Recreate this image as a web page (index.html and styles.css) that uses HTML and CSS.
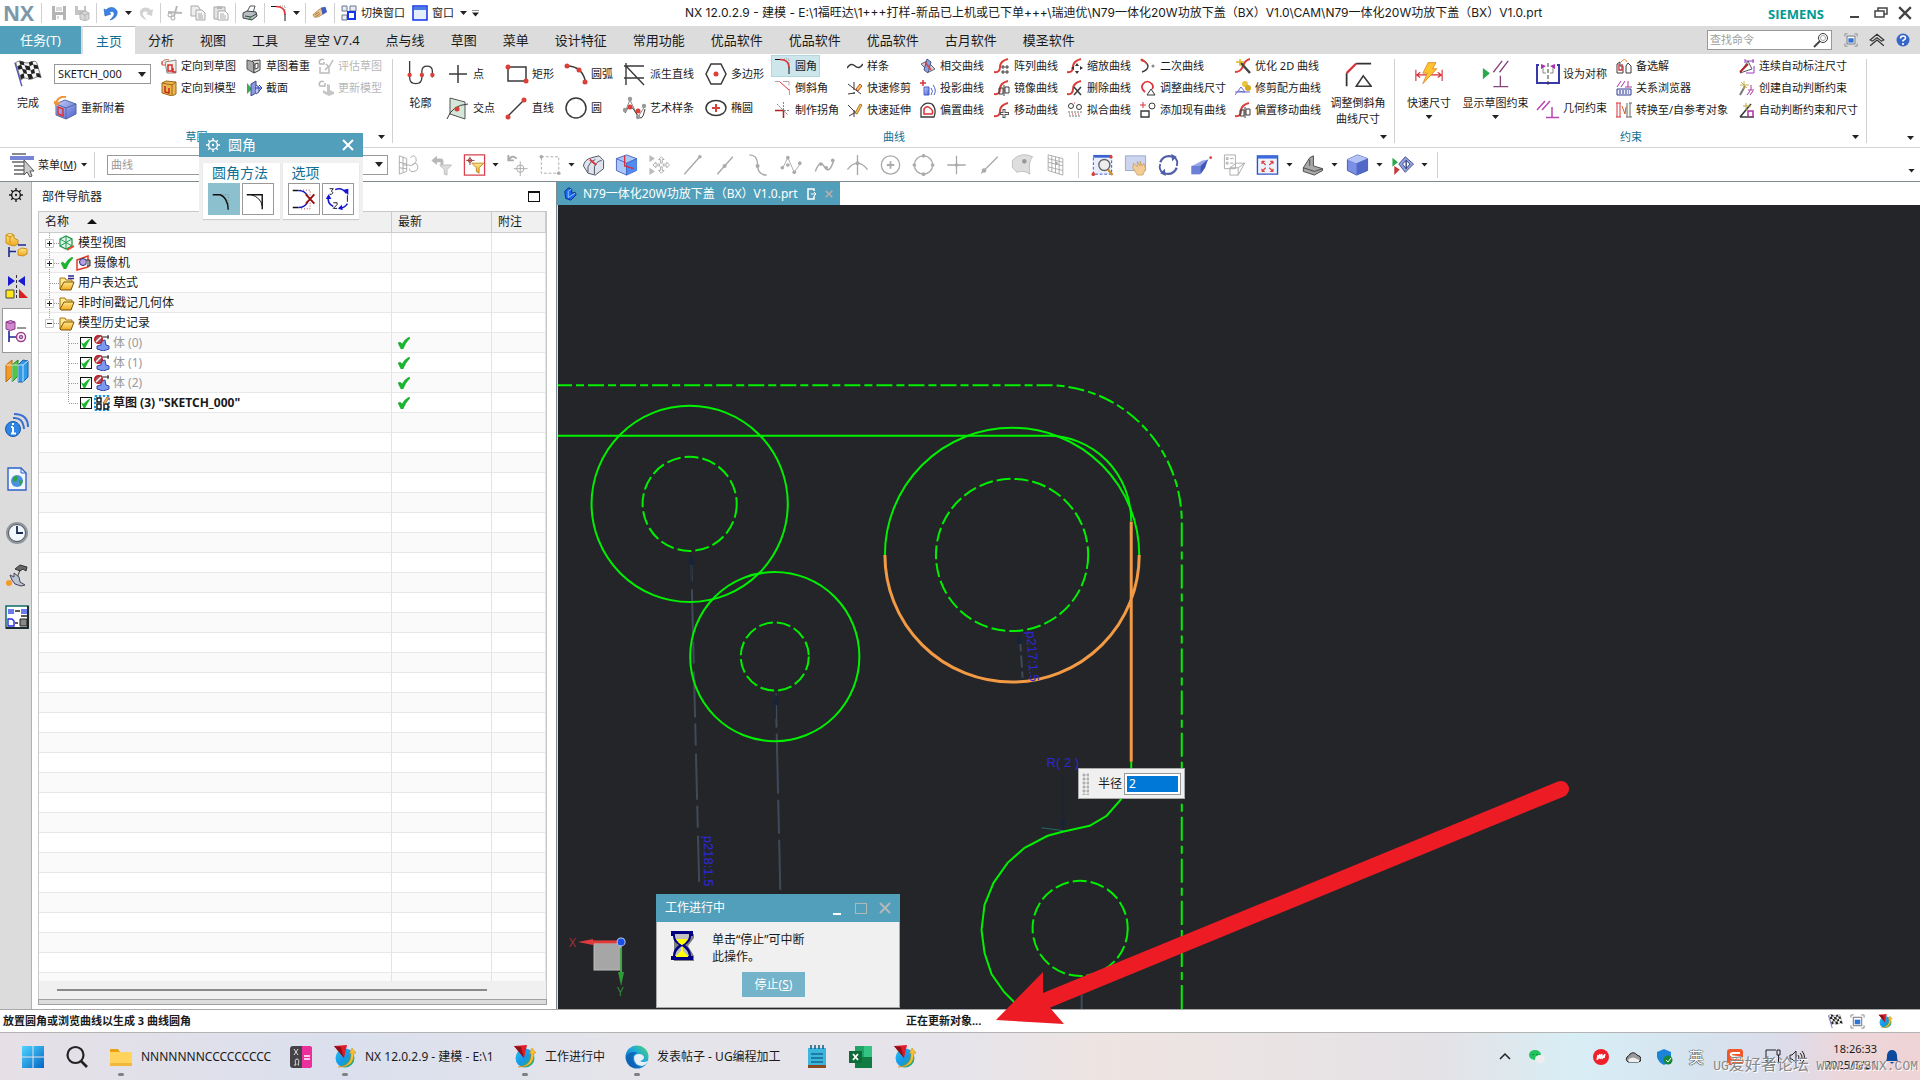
FILE: index.html
```
<!DOCTYPE html>
<html lang="zh-CN">
<head>
<meta charset="utf-8">
<meta name="viewport" content="width=device-width, initial-scale=1">
<title>NX 12.0.2.9 - 建模</title>
<link rel="stylesheet" href="styles.css">
</head>
<body>
<svg class="sprite" aria-hidden="true">
<defs>
<linearGradient id="gBlue" x1="0" y1="0" x2="1" y2="1"><stop offset="0" stop-color="#c9d2fb"/><stop offset="1" stop-color="#4a5fcb"/></linearGradient>
<linearGradient id="gGold" x1="0" y1="0" x2="0" y2="1"><stop offset="0" stop-color="#ffe98c"/><stop offset="1" stop-color="#f0a81c"/></linearGradient>
<linearGradient id="gWin" x1="0" y1="0" x2="1" y2="1"><stop offset="0" stop-color="#4fd4ff"/><stop offset="1" stop-color="#0467c4"/></linearGradient>
<linearGradient id="gNx" x1="0" y1="0" x2="1" y2="1"><stop offset="0" stop-color="#27c5f3"/><stop offset=".5" stop-color="#1796e8"/><stop offset="1" stop-color="#1fb65a"/></linearGradient>
<linearGradient id="gEdge" x1="1" y1="0" x2="0" y2="1"><stop offset="0" stop-color="#52d869"/><stop offset=".45" stop-color="#1aa6e0"/><stop offset="1" stop-color="#0a4fa8"/></linearGradient>
</defs>
<!-- title bar -->
<symbol id="save" viewBox="0 0 16 16"><path d="M1 1h14v14H1z" fill="#b4b4b4"/><path d="M4 1h8v6H4zM5 10h7v5H5z" fill="#fff"/><path d="M5 3h6M5 5h6M7 11v3" stroke="#b4b4b4"/></symbol>
<symbol id="save2" viewBox="0 0 16 16"><path d="M1 1h11v9H1z" fill="#c4c4c4"/><path d="M4 1h6v4H4z" fill="#fff"/><path d="M6 8l5-2 4 2v6l-4 2-5-2z" fill="#d8d8d8" stroke="#b4b4b4"/><path d="M6 8l5 2 4-2M11 10v6" stroke="#b4b4b4" fill="none"/></symbol>
<symbol id="undo" viewBox="0 0 16 16"><path d="M1 4l1 7 6-2-2-1c3-3 6-1 5 2-1 2-2 3-4 5 5-1 8-5 7-9-2-4-7-5-11-1z" fill="#3b82e6" stroke="#2463b8" stroke-width=".6"/></symbol>
<symbol id="redo" viewBox="0 0 16 16"><path d="M15 4l-1 7-6-2 2-1c-3-3-6-1-5 2 1 2 2 3 4 5-5-1-8-5-7-9 2-4 7-5 11-1z" fill="#d2d2d2"/></symbol>
<symbol id="cut" viewBox="0 0 16 16"><path d="M10 1L7 11M1 7l14 1" stroke="#b8b8b8" stroke-width="2"/><circle cx="6" cy="13" r="2" class="s-g"/><circle cx="3" cy="10" r="2" class="s-g"/></symbol>
<symbol id="copy" viewBox="0 0 16 16"><path d="M1 1h7l2 3v7H1z" fill="#eee" class="b-g"/><path d="M6 5h6l3 3v7H6z" fill="#f4f4f4" class="b-g"/><path d="M8 9h4M8 11h5M8 13h5" class="s-g"/></symbol>
<symbol id="paste" viewBox="0 0 16 16"><path d="M1 2h11v12H1z" fill="#e4e4e4" class="b-g"/><path d="M4 1h5v3H4z" fill="#b8b8b8"/><path d="M5 6h7l3 3v6H5z" fill="#fff" class="b-g"/><path d="M7 9h4M7 11h6M7 13h6" class="s-g"/></symbol>
<symbol id="print" viewBox="0 0 16 16"><path d="M5 7l3-6h5l-2 7z" fill="#fff" stroke="#555"/><path d="M1 8l4-2 9 1 1 4-5 4-9-2z" fill="#b9bec4" stroke="#3c4248"/><path d="M3 11l6 1 5-3" stroke="#3c4248" fill="none"/><circle cx="8" cy="13" r="1" fill="#2aa83a"/></symbol>
<symbol id="fillet" viewBox="0 0 16 16"><path d="M9 1h5v5" stroke="#999" stroke-dasharray="1 1" fill="none"/><path d="M0 1.500h5" class="s-b"/><path d="M5 1.500q9 0 9 8" stroke="#e0303a" stroke-width="1.600" fill="none"/><path d="M14 9v7" class="s-b"/></symbol>
<symbol id="chamfer" viewBox="0 0 16 16"><path d="M0 1.500h5M14.500 9v6M8 1.500h6v4" stroke="#b9a0a0" fill="none"/><path d="M5 2l9 8" stroke="#e0303a" fill="none"/></symbol>
<symbol id="corner" viewBox="0 0 16 16"><path d="M0 8.500h8M8.500 8v8" stroke="#b02020" stroke-width="1.500"/><path d="M8.500 0v8M9 8.500h6M2 2l11 11" stroke="#888" stroke-dasharray="2 1"/></symbol>
<symbol id="hand" viewBox="0 0 18 16"><path d="M1 10l7-6 4-2 2 6-6 4-5 1z" fill="#eec58e" stroke="#9a6a35" stroke-width=".7"/><path d="M10 2l5-1 2 6-5 3z" fill="#3d5fc4"/><path d="M3 10l5-3M4 12l5-3" stroke="#9a6a35"/></symbol>
<symbol id="switch" viewBox="0 0 16 16"><path d="M1 1h5v5H1zM9 1h6v5H9zM1 10h5v5H1z" fill="#e8ecf6" stroke="#6b7688"/><path d="M7 7h7v7H7z" fill="#fff" stroke="#1036f0" stroke-width="2"/></symbol>
<symbol id="win" viewBox="0 0 16 16"><path d="M1 1h14v14H1z" fill="#e4eefc" stroke="#1030e8" stroke-width="1.500"/><path d="M2 2h12v3H2z" fill="#4a7de0"/></symbol>
<symbol id="restore" viewBox="0 0 14 14"><path d="M4 5V2h9v6h-3M1 5h9v6H1z" stroke="#444" stroke-width="1.500" fill="none"/></symbol>
<symbol id="x" viewBox="0 0 12 12"><path d="M1 1l10 10M11 1L1 11" stroke="currentColor" stroke-width="2"/></symbol>
<symbol id="lens" viewBox="0 0 16 16"><circle cx="10" cy="6" r="4.500" class="s-k"/><circle cx="10" cy="6" r="2.500" stroke="#aaa" fill="none"/><path d="M7 9l-6 6" stroke="#444" stroke-width="2"/></symbol>
<symbol id="full" viewBox="0 0 16 16"><path d="M1 4V1h3M12 1h3v3M15 12v3h-3M4 15H1v-3" stroke="#888" fill="none"/><path d="M3.500 3.500h9v9h-9z" fill="#fff" stroke="#667"/><path d="M5 6h6v5H5z" fill="#2f74d0"/></symbol>
<symbol id="up2" viewBox="0 0 14 12"><path d="M1 6l6-5 6 5-2 1-4-3-4 3zM1 11l6-5 6 5" stroke="#333" fill="none"/></symbol>
<symbol id="help" viewBox="0 0 14 14"><circle cx="7" cy="7" r="6.500" fill="#3766c8"/><path d="M4.500 5.500q0-2.500 2.500-2.500t2.500 2q0 1.500-2.500 2.500v1M7 10v2" stroke="#fff" stroke-width="1.600" fill="none"/></symbol>
<!-- sketch group -->
<symbol id="flag" viewBox="0 0 32 32"><path d="M1 3l8 27" stroke="#5656c0" stroke-width="1.600"/><path d="M2 3c6-5 9 2 15 0 5-2 8-2 9 0l5 17c-6-3-9 3-14 2-4-2-6-2-9 1z" fill="#f6f6f6" stroke="#333" stroke-width=".7"/><path d="M6 1l5 1 1 4-5-1zM17 3l4-2 1 4-4 2zM4 7l4-2 2 5-5 1zM12 6l6 1 1 5-5-1zM22 5l5 1 1 4-5 0zM9 10l5 1 1 5-4-1zM19 12l4-2 1 5-4 1zM7 17l4-2 1 5-4 2zM15 16l5 0 2 5-5 1zM25 15l4 0 2 5-5-1z" fill="#222"/></symbol>
<symbol id="reattach" viewBox="0 0 24 24"><path d="M2 8l9-4 11 4v10l-10 5-10-4z" fill="url(#gBlue)" stroke="#5566a8"/><path d="M2 8l10 4 10-4M12 12v11" stroke="#5566a8" fill="none"/><path d="M4 11l5 2v7l-5-2z" stroke="#e03030" stroke-width="1.500" fill="none"/><path d="M12 1C6 0 3 3 2 8M0 5l2 4 4-3" stroke="#f0923a" stroke-width="2" fill="none"/></symbol>
<symbol id="orient" viewBox="0 0 16 16"><path d="M4 4l11-2v13l-9 0z" fill="#f1efe8" stroke="#888"/><path d="M7 7h4v6H7zM12 10v4h3" stroke="#d62c2c" stroke-width="1.500" fill="none"/><path d="M1 6c0-4 4-5 7-4M1 3v4h3" stroke="#c84a3a" fill="none"/></symbol>
<symbol id="orientm" viewBox="0 0 16 16"><path d="M1 3l4-2 10 1v12l-4 2-10-3z" fill="#efb64e" stroke="#98691c"/><path d="M1 3l10 2v10M11 5l4-3" stroke="#98691c" fill="none"/><path d="M4 6v6l4 1V8" stroke="#c22a20" stroke-width="1.500" fill="none"/></symbol>
<symbol id="accent" viewBox="0 0 16 16"><path d="M1 2l7 2v11l-7-4z" fill="#aaa" stroke="#555"/><path d="M6 3l8-1v10l-6 3V5z" fill="#dcdcdc" stroke="#444"/><path d="M9 6l3-1v5l-3 1z" fill="#fff" stroke="#444"/></symbol>
<symbol id="section" viewBox="0 0 16 16"><path d="M1 3v11l5-5z" fill="#37ad4c"/><path d="M5 4l5-3v12l-5 3z" fill="#8a9adf" stroke="#444c88"/><path d="M10 5l3 2v5l-3 2" fill="#bfc8f4" stroke="#444c88"/><path d="M9 8h6M13 5l3 3-3 3" stroke="#1b38c8" fill="none"/></symbol>
<symbol id="eval" viewBox="0 0 16 16"><path d="M6 2C3 0 0 3 2 6h4V4M2 9v6h9V8M8 6l3 3 4-7M7 12l4-4" stroke="#bbb" stroke-width="1.500" fill="none"/></symbol>
<symbol id="update" viewBox="0 0 16 16"><path d="M6 2C3 0 0 3 2 6h5V3" stroke="#bbb" stroke-width="1.500" fill="none"/><path d="M5 10l4 2V4l3 1v5l4 2v2l-5 2-6-3z" fill="#c6c6c6"/></symbol>
<!-- curve group -->
<symbol id="profile" viewBox="0 0 32 32"><path d="M3 1v19q0 7 7 7t7-7V13q0-6 6-6t6 6v7" class="s-k" stroke-width="1.500"/><circle cx="3" cy="17" r="2.500" class="dot"/><circle cx="17" cy="17" r="2.500" class="dot"/><circle cx="29" cy="17" r="2.500" class="dot"/></symbol>
<symbol id="point" viewBox="0 0 24 24"><path d="M12 3v18M3 12h18" class="s-k" stroke-width="1.500"/></symbol>
<symbol id="ipoint" viewBox="0 0 24 24"><path d="M4 2l15 4v17L4 18z" fill="#d3e6d8" stroke="#555"/><path d="M1 23Q6 9 22 8" class="s-k"/><circle cx="11" cy="13" r="2.500" class="dot"/></symbol>
<symbol id="rect" viewBox="0 0 24 24"><path d="M3 5h18v14H3z" class="s-k" stroke-width="1.500"/><circle cx="3" cy="5" r="2.500" class="dot"/><circle cx="21" cy="19" r="2.500" class="dot"/></symbol>
<symbol id="line" viewBox="0 0 24 24"><path d="M3 20L19 4" class="s-k" stroke-width="1.500"/><circle cx="3" cy="21" r="2.500" class="dot"/><circle cx="19" cy="4" r="2.500" class="dot"/></symbol>
<symbol id="arc" viewBox="0 0 24 24"><path d="M3 4q16 0 19 18" class="s-k" stroke-width="1.500"/><circle cx="3" cy="4" r="2.500" class="dot"/><circle cx="15" cy="8" r="2.500" class="dot"/><circle cx="21" cy="20" r="2.500" class="dot"/></symbol>
<symbol id="circle" viewBox="0 0 24 24"><circle cx="12" cy="12" r="10" class="s-k" stroke-width="1.500"/></symbol>
<symbol id="derive" viewBox="0 0 24 24"><path d="M1 4h20M1 16h20M3 1v22M3 4l18 19" class="s-k" stroke-width="1.400"/></symbol>
<symbol id="studio" viewBox="0 0 24 24"><path d="M2 16L7 4l8 17 7-11" stroke="#888" fill="none"/><path d="M2 17q5-12 11 0t9-4" class="s-k"/><circle cx="2" cy="14" r="2.200" fill="#999"/><circle cx="7" cy="3" r="2.200" fill="#999"/><circle cx="15" cy="21" r="2.200" fill="#999"/><circle cx="21" cy="10" r="2.200" fill="#999"/><circle cx="7" cy="11" r="2.500" class="dot"/><circle cx="15" cy="15" r="2.500" class="dot"/></symbol>
<symbol id="polygon" viewBox="0 0 24 24"><path d="M7 2h10l5 10-5 10H7L2 12z" class="s-k" stroke-width="1.500"/><circle cx="12" cy="12" r="2.500" class="dot"/></symbol>
<symbol id="ellipse" viewBox="0 0 24 24"><ellipse cx="12" cy="12" rx="10" ry="7.500" class="s-k" stroke-width="1.500"/><path d="M12 8v8M8 12h8" stroke="#d9403a" stroke-width="2"/></symbol>
<symbol id="spline" viewBox="0 0 16 16"><path d="M0 10q4-6 8-2t8-2" class="s-k" stroke-width="1.500"/></symbol>
<symbol id="qtrim" viewBox="0 0 16 16"><path d="M1 4l13 10M1 14l7-1" class="s-k"/><path d="M7 2v12" class="s-k" stroke-dasharray="8 2"/><path d="M9 9l4-5 2 2-4 5z" fill="#f0c84e" stroke="#b02a20" stroke-width=".8"/></symbol>
<symbol id="qext" viewBox="0 0 16 16"><path d="M1 3l9 9M2 14l7-4M7 8v7" class="s-k"/><path d="M8 11l5-9 2 1-5 9z" fill="#f0c84e" stroke="#9a5a20" stroke-width=".8"/></symbol>
<symbol id="intersect" viewBox="0 0 16 16"><path d="M1 6l6-3 8 8-6 3z" fill="#c9d0e4" stroke="#667"/><path d="M7 1l4 3-3 11-4-3z" fill="#8ea2dc" stroke="#44548c"/><path d="M5 4l6 8" stroke="#d9403a" stroke-width="1.500"/></symbol>
<symbol id="project" viewBox="0 0 16 16"><path d="M3 0v6M0 3h6" stroke="#d9303a" stroke-width="1.500"/><path d="M4 7h5v8H4z" fill="url(#gBlue)" stroke="#4a5fcb"/><path d="M11 8q3 3 0 7M13 5q4 5 1 10" stroke="#4a5fcb" fill="none"/></symbol>
<symbol id="offset" viewBox="0 0 16 16"><path d="M1 15V6q4-7 11-4 5 5 2 13z" class="s-k" stroke-width="1.300"/><path d="M4 12V7q3-4 6-1 4 3 2 6z" stroke="#d9303a" fill="none" stroke-width="1.500"/></symbol>
<symbol id="scurve" viewBox="0 0 16 16"><path d="M0 14q6 1 6-5t8-8" stroke="#d9403a" stroke-width="2" fill="none"/></symbol>
<symbol id="pattern" viewBox="0 0 16 16"><use href="#scurve"/><path d="M8 8h2v2H8zM12 8h2v2h-2zM8 13h2v2H8zM12 13h2v2h-2z" class="s-k"/></symbol>
<symbol id="mirror" viewBox="0 0 16 16"><use href="#scurve"/><path d="M5 8h4v6H5zM11 7h4v6h-4zM10 5v11" class="s-k"/></symbol>
<symbol id="move" viewBox="0 0 16 16"><use href="#scurve"/><path d="M10 7v9M6 11.500h9" stroke="#555" stroke-width="3"/><path d="M10 8v7M7 11.500h7" stroke="#fff"/></symbol>
<symbol id="scale" viewBox="0 0 16 16"><use href="#scurve"/><path d="M10 5l2 3h-4zM10 16l-2-3h4zM4 10l3-2v4zM16 10l-3-2v4z" fill="#333"/></symbol>
<symbol id="delete" viewBox="0 0 16 16"><use href="#scurve"/><path d="M7 7l7 8M14 7l-7 8" class="s-k" stroke-width="1.500"/></symbol>
<symbol id="fit" viewBox="0 0 16 16"><circle cx="4" cy="4" r="2.500" class="s-k"/><circle cx="12" cy="5" r="2.500" class="s-k"/><path d="M1 10h14M2 14h12" stroke="#777" stroke-dasharray="2 1"/><path d="M2 12h10M7 1h2" stroke="#d9303a" stroke-dasharray="1 2"/></symbol>
<symbol id="conic" viewBox="0 0 16 16"><path d="M2 2q5 2 6 6 0 4-6 6" class="s-k" stroke-width="1.400"/><path d="M2 2q4 2 5 4" stroke="#d9403a" stroke-width="1.500" fill="none"/><circle cx="2" cy="2" r="1.500" class="dot"/><circle cx="13" cy="8" r="1.500" fill="#888"/></symbol>
<symbol id="resize" viewBox="0 0 16 16"><path d="M5 12Q0 8 3 4q4-5 9 0 2 3 0 5" stroke="#d9303a" fill="none" stroke-width="1.700"/><path d="M7 15l4-6 4 6z" fill="#fff" class="b-k"/></symbol>
<symbol id="addcurve" viewBox="0 0 16 16"><path d="M3 0v6M0 3h6" stroke="#d9303a"/><circle cx="12" cy="4" r="3" class="s-k"/><path d="M1 9h8v6H1z" class="s-k" stroke-width="1.400"/></symbol>
<symbol id="optimize" viewBox="0 0 16 16"><path d="M0 14q6 0 8-6t7-7" stroke="#d9403a" stroke-width="2" fill="none"/><path d="M5 4l10 11" stroke="#444" stroke-width="2.500"/><path d="M5 1v7M1 4h8" stroke="#e0b82a" stroke-width="1.500"/></symbol>
<symbol id="recipe" viewBox="0 0 16 16"><path d="M0 15l6-8 4 5-7-1M0 12h15" stroke="#6b6bc8" fill="none"/><circle cx="10" cy="4" r="3" fill="#e8c442"/><circle cx="13" cy="8" r="3" fill="#d4a820"/></symbol>
<symbol id="bigchamfer" viewBox="0 0 32 32"><path d="M3 30V15M14 4h17" stroke="#333" stroke-width="2"/><path d="M3 15L14 4" stroke="#d9303a" stroke-width="2.500"/><path d="M14 30l8-12 9 12z" class="s-k" stroke-width="1.800"/></symbol>
<!-- constraint group -->
<symbol id="rapid" viewBox="0 0 32 32"><path d="M1 11v13M31 11v13M2 17h28M6 14l-4 3 4 3M26 14l4 3-4 3" stroke="#d9303a" stroke-width="1.300" fill="none"/><path d="M15 3h9l-4 7h5L9 27l5-12H9z" fill="#ffc52e" stroke="#e0862a"/></symbol>
<symbol id="showcon" viewBox="0 0 32 32"><path d="M1 9l8 6-8 7z" fill="#2ba84a"/><path d="M13 14L23 1M20 14L30 1M21 18v13M13 30.500h17" stroke="#86447c" stroke-width="1.500"/></symbol>
<symbol id="symm" viewBox="0 0 24 24"><path d="M3 3H1v18h22V3h-2" stroke="#3838a8" stroke-width="2" fill="none"/><path d="M7 3v8h3M17 3v8h-3" stroke="#888" fill="none"/><path d="M12 1v22" class="s-k" stroke-dasharray="4 2"/><path d="M5 2l5 2-5 3zM19 2l-5 2 5 3z" fill="#b030b0"/></symbol>
<symbol id="geocon" viewBox="0 0 24 24"><path d="M1 14l8-9M6 14l8-9M16 11v11M10 21.500h13" stroke="#b848b0" stroke-width="1.500"/></symbol>
<symbol id="alt" viewBox="0 0 16 16"><path d="M1 15V6l3-2v4h3v7zM10 15V8l2-3 3 3v7z" class="s-k"/><path d="M3 6v6h3V6" stroke="#d9303a" stroke-width="1.300" fill="none"/><path d="M5 4q4-5 6 0" stroke="#e08a30" fill="none"/></symbol>
<symbol id="browser" viewBox="0 0 16 16"><path d="M1 7l4-6M5 7l4-6M12 1v6M9 7h7" stroke="#b030a0" fill="none"/><path d="M1 9h14v6H1z" fill="#eef" stroke="#333c90"/><path d="M3 11h10M3 13h10" stroke="#333c90" stroke-dasharray="2 1"/></symbol>
<symbol id="convert" viewBox="0 0 16 16"><path d="M1 1v14M4 1v14M0 15h5M0 1h5" stroke="#d9303a"/><path d="M6 4l3 8 1-7" stroke="#d06020" fill="none"/><path d="M11 1v14M14 1v14M10 15h6M13 1h3" stroke="#666"/></symbol>
<symbol id="autodim" viewBox="0 0 16 16"><path d="M6 3h9M6 1v4M14 1v4M7 15h8V8" stroke="#9a3ac0" fill="none"/><path d="M1 15L9 3l4 8z" fill="none" stroke="#556"/><path d="M1 14l8-8" stroke="#b02828" stroke-width="2"/></symbol>
<symbol id="autocon" viewBox="0 0 16 16"><path d="M6 6l-5 9" stroke="#777" stroke-width="2"/><path d="M5 1v8M1 5h9M2 2l6 6" stroke="#c8b050"/><path d="M12 5v5M9 10h6M8 15l3-4M11 15l3-4" stroke="#b030a0"/></symbol>
<symbol id="infer" viewBox="0 0 16 16"><path d="M1 15L12 2M1 15h14" class="s-k" stroke-width="1.600"/><path d="M9 15V9h5v6" stroke="#b030a0" stroke-width="1.500" fill="none"/><path d="M7 1v7M4 4h8" stroke="#b8a840"/></symbol>
<!-- selection bar -->
<symbol id="menu" viewBox="0 0 24 24"><path d="M2 1h14M2 9h14M4 13h11M4 17h11M4 21h11" stroke="#666" stroke-width="1.500"/><path d="M0 3h24v4H0z" fill="#7684d6"/><path d="M14 7v15l3-3 3 5 2-1-2-5h4z" fill="#ccc" stroke="#555"/></symbol>
<symbol id="t1" viewBox="0 0 24 24"><path d="M2 2v20l8-3V5zM2 9l8 2M2 15l8 1M6 3v17M6 12h6" class="s-g"/><path d="M14 4q4-4 6 0t-2 7-6 1M16 12q5-4 6 1t-4 6-5-3" class="s-g"/></symbol>
<symbol id="t2" viewBox="0 0 24 24"><path d="M1 7l6-5v3h4q4 0 3 6l-3 3V9H7v3z" fill="#b8b8b8"/><path d="M10 12h13l-5 5v6l-3-1v-5z" fill="#ddd" stroke="#bbb"/></symbol>
<symbol id="t3" viewBox="0 0 24 24"><path d="M1 1h22v22H1z" fill="#fff" stroke="#d84050" stroke-width="1.400"/><path d="M7 3v9M3 7h9M5 7a2 2 0 104 0 2 2 0 10-4 0" stroke="#9a3030" fill="none"/><path d="M9 10h13l-5 5v6l-3-2v-4z" fill="url(#gGold)" stroke="#c08420"/></symbol>
<symbol id="t4" viewBox="0 0 24 24"><path d="M2 1v6h6M2 7q4-7 9-2" stroke="#aaa" stroke-width="2" fill="none"/><circle cx="15" cy="16" r="4" class="s-g"/><path d="M15 8v16M8 16h15" class="s-g"/></symbol>
<symbol id="t5" viewBox="0 0 24 24"><path d="M2 3h19v18H2z" class="s-g" stroke-dasharray="3 2"/><circle cx="2" cy="3" r="2" fill="#aaa"/><circle cx="21" cy="21" r="2" fill="#aaa"/></symbol>
<symbol id="t6" viewBox="0 0 24 24"><path d="M1 13q1-7 9-9l8-2 5 5v9l-9 7-8-2z" fill="#dfe3ec" stroke="#454c58"/><path d="M13 22v-8q2-6 8-7M6 20v-6q2-6 8-8" stroke="#454c58" fill="none"/><path d="M8 6l7 6" stroke="#d9303a" stroke-width="2"/></symbol>
<symbol id="t7" viewBox="0 0 24 24"><path d="M1 5l11-4 11 4v13l-11 5-11-5z" fill="#a8c8f8" stroke="#4460c0"/><path d="M12 10v13l11-5V5z" fill="#4f8af0"/><path d="M1 5l11 5 11-5M12 10v13" stroke="#4460c0" fill="none"/><path d="M10 2v11l10 3" stroke="#d9303a" stroke-width="1.500" fill="none"/></symbol>
<symbol id="t8" viewBox="0 0 24 24"><path d="M1 1l6 4-6 4zM1 15l6 4-6 4z" fill="#bbb"/><path d="M14 3l3 3h-2v4h-2V6h-2zM14 21l3-3h-2v-4h-2v4h-2zM5 12l3-3v2h4v2H8v2zM23 12l-3-3v2h-4v2h4v2z" class="s-g"/></symbol>
<symbol id="t9" viewBox="0 0 24 24"><path d="M3 22L20 3" class="s-g" stroke-width="1.500"/><circle cx="20" cy="3" r="2" fill="#aaa"/></symbol>
<symbol id="t10" viewBox="0 0 24 24"><path d="M3 22L20 3" class="s-g" stroke-width="1.500"/><circle cx="11" cy="13" r="2.200" fill="#aaa"/></symbol>
<symbol id="t11" viewBox="0 0 24 24"><path d="M2 1q9 0 9 11t10 11" class="s-g" stroke-width="1.500"/><circle cx="11" cy="13" r="2.200" fill="#aaa"/></symbol>
<symbol id="t12" viewBox="0 0 24 24"><path d="M2 16L8 4l7 16 7-10" class="s-g"/><circle cx="2" cy="15" r="2" fill="#aaa"/><circle cx="8" cy="4" r="2" fill="#aaa"/><circle cx="8" cy="12" r="2" fill="#aaa"/><circle cx="15" cy="20" r="2" fill="#aaa"/><circle cx="21" cy="10" r="2" fill="#aaa"/></symbol>
<symbol id="t13" viewBox="0 0 24 24"><path d="M2 19q5-14 10-5t10-7" class="s-g" stroke-width="1.600"/><circle cx="8" cy="11" r="2" fill="#aaa"/><circle cx="14" cy="15" r="2" fill="#aaa"/><circle cx="21" cy="7" r="2" fill="#aaa"/></symbol>
<symbol id="t14" viewBox="0 0 24 24"><path d="M1 17q11-14 22 0M12 1v22" class="s-g" stroke-width="1.500"/><circle cx="12" cy="10" r="2.200" fill="#aaa"/></symbol>
<symbol id="t15" viewBox="0 0 24 24"><circle cx="12" cy="12" r="10" class="s-g" stroke-width="1.400"/><path d="M12 8v8M8 12h8" stroke="#aaa" stroke-width="2"/></symbol>
<symbol id="t16" viewBox="0 0 24 24"><circle cx="12" cy="12" r="10" class="s-g" stroke-width="1.400"/><circle cx="12" cy="2" r="2" fill="#aaa"/><circle cx="12" cy="22" r="2" fill="#aaa"/><circle cx="2" cy="12" r="2" fill="#aaa"/><circle cx="22" cy="12" r="2" fill="#aaa"/></symbol>
<symbol id="t17" viewBox="0 0 24 24"><path d="M12 2v20M2 12h20" class="s-g" stroke-width="1.400"/><circle cx="12" cy="12" r="2" fill="#aaa"/></symbol>
<symbol id="t18" viewBox="0 0 24 24"><path d="M3 21L21 3" class="s-g" stroke-width="1.400"/><circle cx="6" cy="18" r="2.500" fill="#aaa"/></symbol>
<symbol id="t19" viewBox="0 0 24 24"><path d="M1 7Q10-3 23 3q-5 5-3 19-6-5-14-2L1 15z" fill="#dedede" stroke="#bbb"/><circle cx="14" cy="8" r="2.500" fill="#999"/></symbol>
<symbol id="t20" viewBox="0 0 24 24"><path d="M4 1l16 4v18L4 18zM8 2v17M12 3v18M16 4v18M4 5l16 4M4 9l16 4M4 14l16 4" class="s-g"/><circle cx="13" cy="10" r="1.500" fill="#aaa"/></symbol>
<symbol id="v1" viewBox="0 0 24 24"><path d="M2 2h20v20H2z" fill="#e9eefc" stroke="#2848d0" stroke-dasharray="3 2"/><path d="M2 1h20v3H2z" fill="#3b62d0"/><circle cx="14" cy="12" r="6" fill="#eee" stroke="#666" stroke-width="1.500"/><path d="M18 17l5 6" stroke="#c89030" stroke-width="2.500"/><circle cx="21" cy="3" r="2" class="dot"/><circle cx="2" cy="22" r="2" class="dot"/></symbol>
<symbol id="v2" viewBox="0 0 24 24"><path d="M1 2h22v16H1z" fill="#ccd4ee" stroke="#98a4cc"/><path d="M10 10l4 4V8l3 5V8l2 5 2-3 2 6-3 7h-6l-5-8z" fill="#f1cc94" stroke="#c89a5c" stroke-width=".8"/></symbol>
<symbol id="v3" viewBox="0 0 24 24"><path d="M3 9q4-9 14-6M21 15q-4 9-14 6" stroke="#5060a8" stroke-width="2.500" fill="none"/><path d="M21 13q2-6-3-10M3 11q-2 6 3 10" stroke="#5060a8" stroke-width="2" fill="none"/><path d="M15 0l6 3-5 5zM9 24l-6-3 5-5z" fill="#5060a8"/></symbol>
<symbol id="v4" viewBox="0 0 24 24"><path d="M1 13l12-6 7-1-5 6-5 10H1z" fill="url(#gBlue)"/><path d="M1 13h10v9H1z" fill="#6a80d8"/><path d="M11 13l8-7-3 9-5 7z" fill="#3f55b8"/><circle cx="22" cy="4" r="1.500" class="dot"/></symbol>
<symbol id="v5" viewBox="0 0 24 24"><path d="M1 1h12v15H1zM3 4h2v2H3zM3 9h2v2H3zM7 5h4M7 10h4M7 23V15l7-5h9l-7 13zM7 15h9v8M16 15l7-5" class="s-g"/></symbol>
<symbol id="v6" viewBox="0 0 24 24"><path d="M1 2h22v20H1z" fill="#eef2fd" stroke="#2f55c8" stroke-width="1.500"/><path d="M1 2h22v3H1z" fill="#3d6adb"/><path d="M6 8h3M6 8v3M18 8h-3M18 8v3M6 19h3M6 19v-3M18 19h-3M18 19v-3M6 8l4 4M18 8l-4 4M6 19l4-4M18 19l-4-4" stroke="#d9403a" fill="none" stroke-width="1.300"/></symbol>
<symbol id="v7" viewBox="0 0 24 24"><path d="M2 15L9 4l4-2v11l10 3v2l-9 5-12-4z" fill="#a8a8a8" stroke="#444"/><path d="M2 15l12 4 9-3M9 6v7" stroke="#444" fill="none"/></symbol>
<symbol id="v8" viewBox="0 0 24 24"><path d="M1 6l11-5 11 4v13l-12 5-10-5z" fill="#7b90e4" stroke="#4458b0"/><path d="M1 6l11-5 11 4-12 5z" fill="#b4c2f6"/><path d="M11 10v13l12-5V5z" fill="#5068c8"/></symbol>
<symbol id="v9" viewBox="0 0 24 24"><path d="M1 4l6 5-6 5z" fill="#2ba84a"/><path d="M3 13l6 4-6 6z" fill="#c83a3a"/><path d="M8 11l7-8 9 8-9 9z" fill="#8ea2dc" stroke="#444c80"/><path d="M12 11l4-4v9zM16 7l4 4-4 5z" fill="#fff" stroke="#333c80"/></symbol>
<!-- resource bar -->
<symbol id="gear" viewBox="0 0 16 16"><circle cx="8" cy="8" r="5" stroke="currentColor" stroke-width="1.600" fill="none"/><circle cx="8" cy="8" r="1.300" fill="currentColor"/><path d="M8 0v3M8 13v3M0 8h3M13 8h3M2.500 2.500l2 2M11.500 11.500l2 2M13.500 2.500l-2 2M4.500 11.500l-2 2" stroke="currentColor" stroke-width="1.600"/></symbol>
<symbol id="asm" viewBox="0 0 24 24"><path d="M1 2l4-2 4 2v3l4 2v4l-4 2-4-1-4-2z" fill="url(#gGold)" stroke="#c8901c"/><path d="M5 4v6M1 2l4 2 4-2" stroke="#c8901c" fill="none"/><path d="M13 17l4-2 5 1v5l-4 2-5-1z" fill="url(#gGold)" stroke="#c8901c"/><path d="M4 14v10M4 18.500h7M13 12h8" stroke="#1c2a90" stroke-width="1.600"/></symbol>
<symbol id="cons" viewBox="0 0 24 24"><path d="M3 1l7 5-7 5zM20 1l-7 5 7 5z" fill="#1a1ad0"/><path d="M11.500 0v24" stroke="#333" stroke-dasharray="3 2"/><path d="M1 15h8v8H1z" fill="#ffe81a" stroke="#444"/><path d="M14 14l9 9h-9z" fill="#d82020"/></symbol>
<symbol id="part" viewBox="0 0 24 24"><path d="M1 3v7q4 3 9 0V3q-4-3-9 0z" fill="#cf8acb" stroke="#8c3c8a"/><path d="M1 3q4 3 9 0" stroke="#8c3c8a" fill="none"/><path d="M12 9h9" stroke="#333"/><path d="M4 12v11M4 18h7" stroke="#1c2a90" stroke-width="1.600"/><circle cx="16" cy="18" r="4.500" fill="#fff" stroke="#9c3c8a" stroke-width="1.500"/><circle cx="16" cy="18" r="1.800" fill="#cf8acb" stroke="#8c3c8a"/></symbol>
<symbol id="books" viewBox="0 0 24 24"><path d="M1 6l6-5v16l-6 6z" fill="#f39a2a" stroke="#b86c10"/><path d="M7 6l6-5v16l-6 6z" fill="#50c648" stroke="#23822a"/><path d="M13 6l5-5 5 1v16l-5 5h-5z" fill="#2f9ae8" stroke="#1860a8"/><path d="M1 6h17l5-4M18 6v17M7 6v17M13 6v17" stroke="#fff" stroke-width=".7" fill="none"/></symbol>
<symbol id="info" viewBox="0 0 24 24"><circle cx="8" cy="16" r="7.500" fill="#2f86e4" stroke="#1c58a8"/><path d="M8 10v2M8 14v7M6 14h2M6 20.500h5" stroke="#fff" stroke-width="2"/><path d="M8 5q10-1 11 11M9 1q14 0 14 13" stroke="#3b6fd0" stroke-width="2" fill="none"/></symbol>
<symbol id="web" viewBox="0 0 24 24"><path d="M3 1h13l5 5v17H3z" fill="#f2f6fd" stroke="#2f62c8" stroke-width="1.400"/><path d="M16 1v5h5" stroke="#2f62c8" fill="none"/><circle cx="12" cy="14" r="6" fill="#4a90e0"/><path d="M8 11q3-4 5 0l-2 4-3-1zM14 13l4 1-3 5z" fill="#2fa43a"/></symbol>
<symbol id="clock" viewBox="0 0 24 24"><circle cx="12" cy="12" r="11" fill="#8f979f"/><circle cx="12" cy="12" r="8.500" fill="#f0f7fd" stroke="#555"/><path d="M12 5v7h6" stroke="#1c2a50" stroke-width="1.800" fill="none"/></symbol>
<symbol id="tools" viewBox="0 0 24 24"><path d="M10 6l5-4 7 2-1 4-3-2-3 2zM15 7l-3 8" fill="#666" stroke="#333"/><path d="M5 12l4 2v-4l5 4 1 5 5 3-4 1-6-2-3-4z" fill="#bcc4d4" stroke="#445"/><circle cx="4" cy="20" r="3" fill="#f39a2a"/></symbol>
<symbol id="roles" viewBox="0 0 24 24"><path d="M1 1h22v22H1z" fill="#fff" stroke="#0c6a6a" stroke-width="1.500"/><path d="M23 1v22H1" stroke="#111" stroke-width="1.500" fill="none"/><path d="M3 4h6v5H3zM16 4h6v5h-6z" fill="#6b7cf0"/><path d="M10 6h5M10 18h3M16 11h6" stroke="#222" stroke-width="1.400"/><path d="M3 14h4l2 2v5H3z" fill="#fff" stroke="#2a2ae0" stroke-width="1.400"/><path d="M15 14h7v7h-7z" fill="#888" stroke="#222"/></symbol>
<!-- tree -->
<symbol id="gplus" viewBox="0 0 20 20"><path d="M10.500 0v20M15 10.500h5" stroke="#999" stroke-dasharray="1 1"/><path d="M6.500 6.500h8v8h-8z" fill="#fff" stroke="#c8c8c8"/><path d="M8 10.500h5M10.500 8v5" stroke="#222"/></symbol>
<symbol id="gminus" viewBox="0 0 20 20"><path d="M10.500 0v6M15 10.500h5" stroke="#999" stroke-dasharray="1 1"/><path d="M6.500 6.500h8v8h-8z" fill="#fff" stroke="#c8c8c8"/><path d="M8 10.500h5" stroke="#222"/></symbol>
<symbol id="gline" viewBox="0 0 20 20"><path d="M10.500 0v20M11 10.500h9" stroke="#999" stroke-dasharray="1 1"/></symbol>
<symbol id="gchild" viewBox="0 0 41 20"><path d="M29.500 0v20M30 10.500h10" stroke="#999" stroke-dasharray="1 1"/></symbol>
<symbol id="gend" viewBox="0 0 41 20"><path d="M29.500 0v10M30 10.500h10" stroke="#999" stroke-dasharray="1 1"/></symbol>
<symbol id="views" viewBox="0 0 16 16"><path d="M1 4l6-3 6 3v7l-6 3-6-3z" fill="#e2f5e8" stroke="#1f9a50" stroke-width="1.300"/><path d="M7 1v13M1 4l12 7M13 4L1 11" stroke="#1f9a50"/><path d="M8 15l7-4" stroke="#e8482a" stroke-width="2"/></symbol>
<symbol id="cam" viewBox="0 0 16 16"><path d="M2 5l11-4v11L2 15z" fill="#fff" stroke="#e03a20" stroke-width="1.500"/><circle cx="8" cy="7" r="3.500" fill="#b8a0e0" stroke="#222c80"/><path d="M11 5h4v6h-3" fill="#999" stroke="#333"/></symbol>
<symbol id="folder" viewBox="0 0 16 16"><path d="M1 14V3h5l1 2h6v3" fill="#ffe890" stroke="#a87410"/><path d="M1 14l4-7h10l-3 8H2z" fill="url(#gGold)" stroke="#7c5408"/></symbol>
<symbol id="folderx" viewBox="0 0 16 16"><use href="#folder"/><path d="M9 1h6M9 3.500h6" stroke="#2a2a90" stroke-width="1.400"/></symbol>
<symbol id="tick" viewBox="0 0 12 12"><path d="M0 6l2-1 2 2q3-5 7-7l1 1Q7 6 5 12H3z" fill="#18b82e" stroke="#0a8a1c" stroke-width=".4"/></symbol>
<symbol id="body" viewBox="0 0 16 16"><path d="M3 11l4-1V6l4-1 1 5 3 1v3l-6 2-6-2z" fill="#7d98f0" stroke="#2c48a8"/><path d="M7 2h8M7 0v4M14 0v4" stroke="#222"/><circle cx="4.500" cy="4.500" r="3.800" fill="#a05058" stroke="#c01820" stroke-width="1.400"/><path d="M2 7l5-5" stroke="#fff" stroke-width="1.400"/></symbol>
<symbol id="sketch" viewBox="0 0 16 16"><path d="M0 0h16v16H0z" fill="#b8e4fa"/><path d="M1 1h14v14H1z" fill="#f4fbff" stroke="#1c96e0" stroke-width="2" stroke-dasharray="2 2"/><path d="M3 3h4v4H3zM3 9h4v5H3zM10 9h4v5h-4z" stroke="#111" stroke-width="1.400" fill="none"/><path d="M9 8l4-6 2 1-4 6z" fill="#f0b840" stroke="#a03020" stroke-width=".6"/></symbol>
<symbol id="prt" viewBox="0 0 16 16"><path d="M2 5l4-4 4 1v5l4-1 1 3-6 6-6-2z" fill="#1668f0" stroke="#0b2a80"/><path d="M6 5l4-3M6 5v7l8-5" stroke="#a8ccff" fill="none"/></symbol>
<symbol id="mod" viewBox="0 0 10 12"><path d="M7 3V1H1v10h6V8" stroke="#fff" stroke-width="1.500" fill="none"/><path d="M4 6h5M7 4l2 2-2 2" stroke="#fff" fill="none"/></symbol>
<symbol id="hourglass" viewBox="0 0 24 30"><path d="M3 3h20v4l-6 8 6 10v5H3z" fill="#808080"/><path d="M0 0h22v5h-2q0 6-6 9 6 4 6 11h2v4H0v-4h2q0-7 6-11-6-3-6-9H0z" fill="#000080"/><path d="M4 3h14v3q-1 4-7 8-6-4-7-8zM4 25q1-6 7-10 6 4 7 10z" fill="#c0c0c0"/><path d="M5 8h12q-2 4-6 6-4-2-6-6zM10 16h2v4l5 5v1H5v-1l5-5z" fill="#ff0"/></symbol>
<!-- fillet dialog -->
<symbol id="f1" viewBox="0 0 32 32"><path d="M14 11.500h6.500V24" stroke="#777" stroke-dasharray="1 2" fill="none"/><path d="M4 11.500h8q8 3 8.500 16" class="s-b" stroke-width="1.500"/></symbol>
<symbol id="f2" viewBox="0 0 32 32"><path d="M4 11.500h16.500V27" class="s-b" stroke-width="1.500"/><path d="M9 11.500q10 3 11.500 12" class="s-b"/></symbol>
<symbol id="f3" viewBox="0 0 32 32"><path d="M12 6.500h10.500v20H12" stroke="#a03030" stroke-dasharray="1 2" fill="none"/><path d="M4 7h6M4 25h6" class="s-b" stroke-width="1.500"/><path d="M10 7q7 0 10 6M10 25q7 0 10-6" stroke="#1818c8" stroke-width="1.500" fill="none"/><path d="M18 11l9 10M27 11l-9 10" stroke="#901010" stroke-width="2"/></symbol>
<symbol id="f4" viewBox="0 0 32 32"><path d="M13 6q7-3 12 4M6 13q-2 8 5 11M17 26q6 0 9-5" stroke="#1818c8" stroke-width="1.600" fill="none"/><path d="M22 6l5 6V5zM3 16l3-5 3 5zM20 22l-4 4 5 2z" fill="#1010e0"/><path d="M7 5h4l-2 2.500q3 2 0 3.500H7M26 12v7M11 20h4v2l-4 4h4" class="s-b"/></symbol>
<!-- task bar -->
<symbol id="start" viewBox="0 0 24 24"><path d="M1 1h10.500v10.500H1zM12.500 1H23v10.500H12.500zM1 12.500h10.500V23H1zM12.500 12.500H23V23H12.500z" fill="url(#gWin)"/></symbol>
<symbol id="search" viewBox="0 0 24 24"><circle cx="10.500" cy="10" r="8" stroke="#222" stroke-width="2.200" fill="none"/><path d="M16 16l6 6" stroke="#222" stroke-width="2.600"/></symbol>
<symbol id="explorer" viewBox="0 0 24 24"><path d="M1 4h8l2 3h12v3H1z" fill="#eaa013"/><path d="M1 7h22v14H1z" fill="#ffd35c"/><path d="M1 18h22v3H1z" fill="#f3b83a"/></symbol>
<symbol id="calc" viewBox="0 0 24 24"><rect x="1" y="1" width="22" height="22" rx="3" fill="#454348"/><path d="M13 1h7q3 0 3 3v16q0 3-3 3h-7z" fill="#ec2f9c"/><path d="M15 11h6M15 14h6" stroke="#fff" stroke-width="1.500"/><path d="M5 4l4 6M9 4l-4 6M5 20h2q-2-6 1-6t1 6h1" stroke="#ddd" fill="none"/></symbol>
<symbol id="nx" viewBox="0 0 24 24"><circle cx="12" cy="13" r="9.500" fill="url(#gNx)"/><path d="M1 1l13-1-3 13z" fill="#e01c28"/><path d="M1 1l10 12L8 2z" fill="#8f1018"/><path d="M5 22q14-1 13-14l-2 1 3-6 4 5h-2q0 15-16 14z" fill="#f9c02c" stroke="#c48a10" stroke-width=".5"/></symbol>
<symbol id="edge" viewBox="0 0 24 24"><circle cx="12" cy="12" r="11.500" fill="url(#gEdge)"/><path d="M9 13q0-4 5-4 4 0 5 3 0 3-4 4 3 2 8 0-2 4-6 5-8-1-8-8z" fill="#e8eef6"/><path d="M1 12Q5 5 13 8q-6 1-5 7 1 6 8 7-13 3-15-10z" fill="#0d5fb4" opacity=".8"/></symbol>
<symbol id="notepad" viewBox="0 0 24 24"><path d="M3 3h18v18H3z" fill="#3cb6dc"/><path d="M3 20h18v3H3z" fill="#8c4a20"/><path d="M6 0v4M10 0v4M14 0v4M18 0v4" stroke="#15597c" stroke-width="1.500"/><path d="M6 9h12M6 13h12M6 17h12" stroke="#12698e" stroke-width="1.500"/></symbol>
<symbol id="excel" viewBox="0 0 24 24"><path d="M6 1h17v22H6z" fill="#21a366"/><path d="M15 1h8v11h-8z" fill="#33c481"/><path d="M6 12h17v11H6z" fill="#107c41"/><path d="M0 6h13v12H0z" fill="#0d6b38"/><path d="M4 9l5 6M9 9l-5 6" stroke="#fff" stroke-width="1.800"/></symbol>
<symbol id="chev" viewBox="0 0 12 12"><path d="M1 8l5-5 5 5" stroke="#222" stroke-width="1.500" fill="none"/></symbol>
<symbol id="wechat" viewBox="0 0 16 16"><ellipse cx="6" cy="6" rx="6" ry="5" fill="#22c35e"/><ellipse cx="11" cy="10" rx="5" ry="4" fill="#eee"/><path d="M4 5v1M8 5v1" stroke="#0b5c2a"/></symbol>
<symbol id="redapp" viewBox="0 0 16 16"><circle cx="8" cy="8" r="8" fill="#f0202a"/><path d="M4 11l1-5v4l2-5v5l2-5v5l2-4v3l1-4" stroke="#fff" stroke-width="1.300" fill="none"/></symbol>
<symbol id="cloud" viewBox="0 0 16 16"><path d="M3 13q-3-2-1-5 2-1 3-3 4-3 7 1 4 1 4 4t-3 3z" fill="#999" stroke="#222"/><path d="M3 11q4-5 11 0v2H4z" fill="#eee"/></symbol>
<symbol id="shield" viewBox="0 0 16 16"><path d="M7 0l7 3v5q-1 5-7 8-6-3-7-8V3z" fill="#1b83d8"/><circle cx="11" cy="11" r="4.500" fill="#178a3a"/><path d="M9 11l2 2 3-4" stroke="#fff" fill="none"/></symbol>
<symbol id="sogou" viewBox="0 0 16 16"><rect x="0" y="0" width="16" height="16" rx="3" fill="#f0582a"/><path d="M13 4H6q-3 0-2 2t7 2 1 4H3" stroke="#fff" stroke-width="2" fill="none"/></symbol>
<symbol id="monitor" viewBox="0 0 16 16"><path d="M11 1H1v11h9M6 12v3M3 15h7M12 1h3v5h-3zM13.500 6v9" stroke="#222" fill="none"/></symbol>
<symbol id="sound" viewBox="0 0 16 16"><path d="M1 6h2l4-4v12l-4-4H1zM9 6q2 2 0 4M11 4q4 4 0 8M13 2q5 6 0 12" stroke="#222" fill="none"/></symbol>
<symbol id="bell" viewBox="0 0 14 16"><path d="M1 12q1-1 1-6 1-5 5-5t5 5q0 5 1 6zM5 13h4q-2 3-4 0z" fill="#0b4a9e"/></symbol>
</svg>

<div class="app">
<header class="titlebar">
  <div class="logo">NX</div>
  <div class="quick">
    <span class="sep first"></span>
    <button aria-label="保存"><svg><use href="#save"/></svg></button>
    <button aria-label="全部保存"><svg><use href="#save2"/></svg></button>
    <span class="sep"></span>
    <button aria-label="撤销"><svg><use href="#undo"/></svg></button><i class="caret"></i>
    <button aria-label="重做"><svg><use href="#redo"/></svg></button>
    <span class="sep"></span>
    <button aria-label="剪切"><svg><use href="#cut"/></svg></button>
    <button aria-label="复制"><svg><use href="#copy"/></svg></button>
    <button aria-label="粘贴"><svg><use href="#paste"/></svg></button>
    <span class="sep"></span>
    <button aria-label="打印"><svg><use href="#print"/></svg></button>
    <span class="sep"></span>
    <button aria-label="圆角"><svg><use href="#fillet"/></svg></button><i class="caret"></i>
    <span class="sep"></span>
    <button aria-label="触控"><svg><use href="#hand"/></svg></button>
    <span class="sep"></span>
    <button class="wide"><svg><use href="#switch"/></svg>切换窗口</button>
    <button class="wide"><svg><use href="#win"/></svg>窗口</button><i class="caret"></i><i class="caret bar"></i>
  </div>
  <h1>NX 12.0.2.9 - 建模 - E:\1福旺达\1+++打样-新品已上机或已下单+++\瑞迪优\N79一体化20W功放下盖（BX）V1.0\CAM\N79一体化20W功放下盖（BX）V1.0.prt</h1>
  <div class="brand">SIEMENS</div>
  <div class="winbtns">
    <button aria-label="最小化"><span class="min"></span></button>
    <button aria-label="还原"><svg><use href="#restore"/></svg></button>
    <button aria-label="关闭"><svg><use href="#x"/></svg></button>
  </div>
</header>

<nav class="tabs">
  <a class="file" href="#">任务(T)</a>
  <a class="active" href="#">主页</a>
  <a href="#">分析</a><a href="#">视图</a><a href="#">工具</a><a href="#">星空 V7.4</a><a href="#">点与线</a><a href="#">草图</a><a href="#">菜单</a><a href="#">设计特征</a><a href="#">常用功能</a><a href="#">优品软件</a><a href="#">优品软件</a><a href="#">优品软件</a><a href="#">古月软件</a><a href="#">模圣软件</a>
  <div class="find"><input type="text" placeholder="查找命令" aria-label="查找命令"><svg><use href="#lens"/></svg></div>
  <div class="tabtools">
    <button aria-label="全屏"><svg><use href="#full"/></svg></button>
    <button aria-label="最小化功能区"><svg><use href="#up2"/></svg></button>
    <button aria-label="帮助"><svg><use href="#help"/></svg></button>
  </div>
</nav>

<section class="ribbon">
  <div class="group">
    <div class="cols c-sketch">
      <button class="big"><svg><use href="#flag"/></svg>完成</button>
      <div class="col mid">
        <div class="selrow"><select aria-label="草图名"><option>SKETCH_000</option></select></div>
        <button><svg><use href="#reattach"/></svg>重新附着</button>
      </div>
      <div class="col"><button><svg><use href="#orient"/></svg>定向到草图</button><button><svg><use href="#orientm"/></svg>定向到模型</button></div>
      <div class="col"><button><svg><use href="#accent"/></svg>草图着重</button><button><svg><use href="#section"/></svg>截面</button></div>
      <div class="col"><button disabled><svg><use href="#eval"/></svg>评估草图</button><button disabled><svg><use href="#update"/></svg>更新模型</button></div>
    </div>
    <div class="foot">草图<i class="caret"></i></div>
  </div>
  <div class="group">
    <div class="cols c-curve">
      <button class="big"><svg><use href="#profile"/></svg>轮廓</button>
      <div class="col mid"><button><svg><use href="#point"/></svg>点</button><button><svg><use href="#ipoint"/></svg>交点</button></div>
      <div class="col mid"><button><svg><use href="#rect"/></svg>矩形</button><button><svg><use href="#line"/></svg>直线</button></div>
      <div class="col mid"><button><svg><use href="#arc"/></svg>圆弧</button><button><svg><use href="#circle"/></svg>圆</button></div>
      <div class="col mid"><button><svg><use href="#derive"/></svg>派生直线</button><button><svg><use href="#studio"/></svg>艺术样条</button></div>
      <div class="col mid"><button><svg><use href="#polygon"/></svg>多边形</button><button><svg><use href="#ellipse"/></svg>椭圆</button></div>
      <div class="col inset"><button class="on"><svg><use href="#fillet"/></svg>圆角</button><button><svg><use href="#chamfer"/></svg>倒斜角</button><button><svg><use href="#corner"/></svg>制作拐角</button></div>
      <div class="col"><button><svg><use href="#spline"/></svg>样条</button><button><svg><use href="#qtrim"/></svg>快速修剪</button><button><svg><use href="#qext"/></svg>快速延伸</button></div>
      <div class="col"><button><svg><use href="#intersect"/></svg>相交曲线</button><button><svg><use href="#project"/></svg>投影曲线</button><button><svg><use href="#offset"/></svg>偏置曲线</button></div>
      <div class="col"><button><svg><use href="#pattern"/></svg>阵列曲线</button><button><svg><use href="#mirror"/></svg>镜像曲线</button><button><svg><use href="#move"/></svg>移动曲线</button></div>
      <div class="col"><button><svg><use href="#scale"/></svg>缩放曲线</button><button><svg><use href="#delete"/></svg>删除曲线</button><button><svg><use href="#fit"/></svg>拟合曲线</button></div>
      <div class="col"><button><svg><use href="#conic"/></svg>二次曲线</button><button><svg><use href="#resize"/></svg>调整曲线尺寸</button><button><svg><use href="#addcurve"/></svg>添加现有曲线</button></div>
      <div class="col"><button><svg><use href="#optimize"/></svg>优化 2D 曲线</button><button><svg><use href="#recipe"/></svg>修剪配方曲线</button><button><svg><use href="#mirror"/></svg>偏置移动曲线</button></div>
      <button class="big"><svg><use href="#bigchamfer"/></svg>调整倒斜角<br>曲线尺寸</button>
    </div>
    <div class="foot">曲线<i class="caret"></i></div>
  </div>
  <div class="group">
    <div class="cols c-con">
      <button class="big"><svg><use href="#rapid"/></svg>快速尺寸<i class="caret"></i></button>
      <button class="big"><svg><use href="#showcon"/></svg>显示草图约束<i class="caret"></i></button>
      <div class="col mid lead"><button><svg><use href="#symm"/></svg>设为对称</button><button><svg><use href="#geocon"/></svg>几何约束</button></div>
      <div class="col"><button><svg><use href="#alt"/></svg>备选解</button><button><svg><use href="#browser"/></svg>关系浏览器</button><button><svg><use href="#convert"/></svg>转换至/自参考对象</button></div>
      <div class="col"><button><svg><use href="#autodim"/></svg>连续自动标注尺寸</button><button><svg><use href="#autocon"/></svg>创建自动判断约束</button><button><svg><use href="#infer"/></svg>自动判断约束和尺寸</button></div>
    </div>
    <div class="foot">约束<i class="caret"></i></div>
  </div>
  <div class="group rest"><div class="foot"><i class="caret"></i></div></div>
</section>

<div class="selbar">
  <button class="menu"><svg><use href="#menu"/></svg><span>菜单(<u>M</u>)</span><i class="caret"></i></button>
  <span class="sep"></span>
  <select class="filter" aria-label="类型过滤器"><option>曲线</option></select>
  <div class="icons">
    <svg><use href="#t1"/></svg><svg><use href="#t2"/></svg><svg><use href="#t3"/></svg><i class="caret"></i><svg><use href="#t4"/></svg><svg><use href="#t5"/></svg><i class="caret"></i><svg><use href="#t6"/></svg><svg><use href="#t7"/></svg><svg><use href="#t8"/></svg><svg><use href="#t9"/></svg><svg><use href="#t10"/></svg><svg><use href="#t11"/></svg><svg><use href="#t12"/></svg><svg><use href="#t13"/></svg><svg><use href="#t14"/></svg><svg><use href="#t15"/></svg><svg><use href="#t16"/></svg><svg><use href="#t17"/></svg><svg><use href="#t18"/></svg><svg><use href="#t19"/></svg><svg><use href="#t20"/></svg>
  </div>
  <span class="sep"></span>
  <div class="icons view">
    <svg><use href="#v1"/></svg><svg><use href="#v2"/></svg><svg><use href="#v3"/></svg><svg><use href="#v4"/></svg><svg><use href="#v5"/></svg><svg><use href="#v6"/></svg><i class="caret"></i><svg><use href="#v7"/></svg><i class="caret"></i><svg><use href="#v8"/></svg><i class="caret"></i><svg><use href="#v9"/></svg><i class="caret"></i>
  </div>
  <span class="sep"></span>
  <i class="caret last"></i>
</div>

<main>
  <aside class="resource">
    <button class="gearbtn" aria-label="资源条选项"><svg><use href="#gear"/></svg></button>
    <button aria-label="装配导航器"><svg><use href="#asm"/></svg></button>
    <button aria-label="约束导航器"><svg><use href="#cons"/></svg></button>
    <button class="on" aria-label="部件导航器"><svg><use href="#part"/></svg></button>
    <button class="reuse" aria-label="重用库"><svg><use href="#books"/></svg></button>
    <button class="tall" aria-label="HD3D 工具"><svg><use href="#info"/></svg></button>
    <button class="tall" aria-label="Web 浏览器"><svg><use href="#web"/></svg></button>
    <button class="tall" aria-label="历史记录"><svg><use href="#clock"/></svg></button>
    <button class="wizard" aria-label="加工向导"><svg><use href="#tools"/></svg></button>
    <button aria-label="角色"><svg><use href="#roles"/></svg></button>
  </aside>

  <section class="navigator">
    <div class="navhead"><h2>部件导航器</h2><button aria-label="最大化"></button></div>
    <div class="tree">
      <div class="rows">
      <table>
        <colgroup><col class="c1"><col class="c2"><col class="c3"></colgroup>
        <thead><tr><th>名称<i class="sort"></i></th><th>最新</th><th>附注</th></tr></thead>
        <tbody>
          <tr><td><div><svg class="g"><use href="#gplus"/></svg><svg class="i"><use href="#views"/></svg>模型视图</div></td><td></td><td></td></tr>
          <tr><td><div><svg class="g"><use href="#gplus"/></svg><svg class="k"><use href="#tick"/></svg><svg class="i"><use href="#cam"/></svg>摄像机</div></td><td></td><td></td></tr>
          <tr><td><div><svg class="g"><use href="#gline"/></svg><svg class="i"><use href="#folderx"/></svg>用户表达式</div></td><td></td><td></td></tr>
          <tr><td><div><svg class="g"><use href="#gplus"/></svg><svg class="i"><use href="#folder"/></svg>非时间戳记几何体</div></td><td></td><td></td></tr>
          <tr><td><div><svg class="g"><use href="#gminus"/></svg><svg class="i"><use href="#folder"/></svg>模型历史记录</div></td><td></td><td></td></tr>
          <tr><td><div class="dim"><svg class="g2"><use href="#gchild"/></svg><label><input type="checkbox" checked><svg class="i"><use href="#body"/></svg>体 (0)</label></div></td><td><svg class="ok"><use href="#tick"/></svg></td><td></td></tr>
          <tr><td><div class="dim"><svg class="g2"><use href="#gchild"/></svg><label><input type="checkbox" checked><svg class="i"><use href="#body"/></svg>体 (1)</label></div></td><td><svg class="ok"><use href="#tick"/></svg></td><td></td></tr>
          <tr><td><div class="dim"><svg class="g2"><use href="#gchild"/></svg><label><input type="checkbox" checked><svg class="i"><use href="#body"/></svg>体 (2)</label></div></td><td><svg class="ok"><use href="#tick"/></svg></td><td></td></tr>
          <tr><td><div class="bold"><svg class="g2"><use href="#gend"/></svg><label><input type="checkbox" checked><svg class="i"><use href="#sketch"/></svg>草图 (3) "SKETCH_000"</label></div></td><td><svg class="ok"><use href="#tick"/></svg></td><td></td></tr>
          <tr><td><td><td></tr><tr><td><td><td></tr><tr><td><td><td></tr><tr><td><td><td></tr>
          <tr><td><td><td></tr><tr><td><td><td></tr><tr><td><td><td></tr><tr><td><td><td></tr>
          <tr><td><td><td></tr><tr><td><td><td></tr><tr><td><td><td></tr><tr><td><td><td></tr>
          <tr><td><td><td></tr><tr><td><td><td></tr><tr><td><td><td></tr><tr><td><td><td></tr>
          <tr><td><td><td></tr><tr><td><td><td></tr><tr><td><td><td></tr><tr><td><td><td></tr>
          <tr><td><td><td></tr><tr><td><td><td></tr><tr><td><td><td></tr><tr><td><td><td></tr>
          <tr><td><td><td></tr><tr><td><td><td></tr><tr><td><td><td></tr><tr><td><td><td></tr>
          <tr><td><td><td></tr>
        </tbody>
      </table>
      </div>
      <div class="hscroll"><span></span></div>
    </div>
    <div class="splitter"></div>
  </section>

  <section class="view-area">
    <div class="doctabs"><a href="#"><svg class="p"><use href="#prt"/></svg>N79一体化20W功放下盖（BX）V1.0.prt<svg class="m"><use href="#mod"/></svg><svg class="c"><use href="#x"/></svg></a></div>
    <div class="canvas">
      <svg class="drawing" viewBox="559 206 1362 803" preserveAspectRatio="xMinYMin slice">
        <g class="dimline">
          <path d="M692 560L700 884" stroke-dasharray="22 8 46 6"/>
          <path d="M776.500 694L781 890" stroke-dasharray="34 6 60 6"/>
          <path d="M1020.500 640L1023 678" stroke-dasharray="12 4"/>
          <path d="M1082 995v15"/>
        </g>
        <g class="arrowline"><path d="M692 555v30M776 695v24M1063.500 776v54"/><path d="M692 556l2 9h-4zM777 696l2 9h-4zM1020 635l2 9h-4zM1063 830l2-9h-4z"/></g>
        <path d="M1042 828l22 3" stroke="#236a6c" fill="none"/>
        <g class="solid">
          <circle cx="690.500" cy="504.500" r="98"/>
          <circle cx="775.500" cy="657" r="84.500"/>
          <path d="M885.500 555.500a127 127 0 01254 0"/>
          <path d="M557 436.500H1048a83 85 0 0183.500 85M1131.500 762v6q-1 18-10.500 32l-14 16-17 10-27 6-15 4-23 12-17 15-14 20-9 22-3 25 3 23 7 21 12.500 18 13 13"/>
        </g>
        <g class="dash">
          <circle cx="690.500" cy="504.500" r="47"/><circle cx="775.500" cy="657" r="34"/><circle cx="1012.500" cy="555.500" r="76"/><circle cx="1080.500" cy="928.500" r="47.500"/>
          <path d="M557 386H1048a134 137 0 01134 137"/>
        </g>
        <path class="dashdot" d="M1182 523V1200"/>
        <g class="picked"><path d="M885.500 555.500a127 127 0 00254 0M1131.500 522V762"/></g>
        <g class="dimtext"><text transform="translate(705 836) rotate(90)">p218:1.5</text><text transform="translate(1027 632) rotate(86)">p217:1.5</text><text x="1047" y="767">R( 2 )</text></g>
        <g>
          <path d="M595 943h27v27h-27z" fill="#a6a6a6" stroke="#c4c4c4"/>
          <path d="M619 942h-26" stroke="#e03a3a" stroke-width="3"/><path d="M579 942l15-3v6z" fill="#e03a3a"/>
          <path d="M622 948v26" stroke="#3fa345" stroke-width="2"/><path d="M622 986l-3-14h6z" fill="#2f9a38"/>
          <circle cx="622" cy="942" r="4" fill="#1650e8" stroke="#b8c8f0"/>
          <text class="ax" x="570" y="947">X</text><text class="ay" x="618" y="996">Y</text>
        </g>
      </svg>
      <div class="radius"><span class="grip"></span><label for="radius">半径</label><input id="radius" type="text" value="2"></div>
      <div class="progress" role="dialog" aria-label="工作进行中">
        <div class="ptitle">工作进行中<span class="min"></span><span class="max"></span><svg><use href="#x"/></svg></div>
        <div class="pbody"><svg><use href="#hourglass"/></svg><p>单击“停止”可中断<br>此操作。</p></div>
        <button>停止(<u>S</u>)</button>
      </div>
    </div>
  </section>
</main>

<footer class="status">
  <span class="cue">放置圆角或浏览曲线以生成 3 曲线圆角</span>
  <span class="state">正在更新对象...</span>
  <span class="sicons"><svg><use href="#flag"/></svg><svg><use href="#full"/></svg><svg><use href="#nx"/></svg></span>
</footer>

<footer class="taskbar">
  <button aria-label="开始"><svg><use href="#start"/></svg></button>
  <button aria-label="搜索"><svg><use href="#search"/></svg></button>
  <button class="app-l run"><svg><use href="#explorer"/></svg><span>NNNNNNNCCCCCCCCC</span></button>
  <button class="solo" aria-label="计算器"><svg><use href="#calc"/></svg></button>
  <button class="app-l run"><svg><use href="#nx"/></svg><span class="clip">NX 12.0.2.9 - 建模 - E:\1福旺达</span></button>
  <button class="app-l run short"><svg><use href="#nx"/></svg><span>工作进行中</span></button>
  <button class="app-l run"><svg><use href="#edge"/></svg><span>发表帖子 - UG编程加工</span></button>
  <button class="solo" aria-label="记事本"><svg><use href="#notepad"/></svg></button>
  <button class="solo" aria-label="Excel"><svg><use href="#excel"/></svg></button>
  <button class="solo" aria-label="NX"><svg><use href="#nx"/></svg></button>
  <div class="tray">
    <svg class="sm"><use href="#chev"/></svg><svg><use href="#wechat"/></svg><svg class="far"><use href="#redapp"/></svg><svg><use href="#cloud"/></svg><svg><use href="#shield"/></svg><span class="ime">英</span><svg class="sg"><use href="#sogou"/></svg><svg class="mo"><use href="#monitor"/></svg><svg class="so"><use href="#sound"/></svg>
    <time>18:26:33<br>2025/3/21</time>
    <svg class="bl"><use href="#bell"/></svg>
  </div>
  <div class="watermark">UG<b>爱好者论坛</b> WWW.UGSNX.COM</div>
</footer>

<div class="fillet" role="dialog" aria-label="圆角">
  <div class="ftitle"><svg><use href="#gear"/></svg>圆角<button aria-label="关闭"><svg><use href="#x"/></svg></button></div>
  <div class="fbody">
    <fieldset><legend>圆角方法</legend><div><button class="on" aria-label="修剪"><svg><use href="#f1"/></svg></button><button aria-label="取消修剪"><svg><use href="#f2"/></svg></button></div></fieldset>
    <fieldset><legend>选项</legend><div><button aria-label="删除第三条曲线"><svg><use href="#f3"/></svg></button><button aria-label="创建备选圆角"><svg><use href="#f4"/></svg></button></div></fieldset>
  </div>
</div>

<svg class="pointer" viewBox="0 0 1920 1080" aria-hidden="true"><path d="M1040 1003L1561 789" stroke="#ed1c24" stroke-width="16" stroke-linecap="round"/><path d="M996 1020l47-48v22l8 15 13 15z" fill="#ed1c24"/></svg>
</div>
</body>
</html>
```
FILE: styles.css
```
* { box-sizing: border-box; }
body { margin: 0; font: 12px/16px "Noto Sans", "Noto Sans CJK SC", sans-serif; color: #1a1a1a; background: #fff; }
button, input, select { font: inherit; color: inherit; }
button { background: none; border: 0; padding: 0; }
a { color: inherit; text-decoration: none; }
h1, h2, p { margin: 0; font-size: 12px; font-weight: 400; }
svg { display: block; flex: none; width: 16px; height: 16px; }
.sprite { position: absolute; width: 0; height: 0; }
.s-k { stroke: #3a3a3a; fill: none; }
.s-b { stroke: #111; fill: none; }
.s-g { stroke: #a8a8a8; fill: none; }
.b-g { stroke: #a8a8a8; }
.b-k { stroke: #333; }
.dot { fill: #d9403a; }

.app { position: relative; display: flex; flex-direction: column; height: 100vh; overflow: hidden; }
.caret { flex: none; display: block; width: 7px; height: 4px; background: #222; clip-path: polygon(0 0, 100% 0, 50% 100%); }
.caret.bar { height: 7px; clip-path: polygon(0 0, 100% 0, 100% 1px, 0 1px, 0 3px, 100% 3px, 50% 100%, 0 3px); }
.sep { flex: none; width: 1px; background: #d0d0d0; }

/* title bar */
.titlebar { display: flex; align-items: center; height: 26px; flex: none; }
.logo { width: 37px; padding-left: 3px; font: 700 21px/26px "Open Sans", sans-serif; color: #7d98aa; }
.quick { display: flex; align-items: center; width: 648px; padding-left: 4px; gap: 5px; font-size: 11px; }
.quick .sep { height: 20px; }
.quick .first { margin-right: 3px; }
.quick button { display: flex; align-items: center; gap: 4px; padding: 0 1px; }
.titlebar h1 { flex: 1; white-space: nowrap; font-family: Inter, "Noto Sans CJK SC", sans-serif; }
.brand { width: 82px; font: 700 13px/26px "Open Sans", sans-serif; color: #009a93; padding-top: 1px; }
.winbtns { display: flex; align-items: center; padding-right: 7px; gap: 9px; color: #444; }
.winbtns svg { width: 14px; height: 14px; }
.winbtns button { width: 15px; }
.min { display: block; width: 9px; height: 2px; background: #444; margin-top: 8px; }

/* ribbon tabs */
.tabs { display: flex; align-items: center; height: 28px; flex: none; background: #dcdcdc; font-size: 13px; line-height: 28px; }
.tabs a { padding: 0 13px; white-space: nowrap; }
.tabs .file { width: 81px; padding: 0; margin-right: 2px; text-align: center; background: #519fba; color: #fff; }
.tabs .active { background: #fff; color: #0f6f93; border-top: 1px solid #b8b8b8; }
.find { display: flex; align-items: center; width: 125px; height: 20px; margin-left: auto; padding: 0 2px; background: #fff; border: 1px solid #999; }
.find input { flex: 1; min-width: 0; border: 0; padding: 0; outline: 0; background: none; font-size: 11px; line-height: 18px; }
.find input::placeholder { color: #a0a0a0; }
.tabtools { display: flex; align-items: center; gap: 10px; padding: 0 9px 0 11px; }
.tabtools svg { height: 14px; }

/* ribbon */
.ribbon { display: flex; height: 94px; flex: none; border-bottom: 1px solid #d4d4d4; font-size: 11px; line-height: 16px; }
.group { position: relative; display: flex; flex-direction: column; flex: none; padding-top: 1px; background: linear-gradient(#d0d0d0, #d0d0d0) right 5px / 1px 84px no-repeat; }
.group.rest { flex: 1; background: none; }
.cols { display: grid; height: 73px; padding-right: 1px; }
.c-sketch { grid-template-columns: 54px 106px 85px 72px 75px; }
.c-curve { grid-template-columns: 53px 59px 59px 59px 81px 67px 75px 73px 74px 73px 73px 95px 86px 74px; }
.c-con { grid-template-columns: 66px 67px 87px 123px 128px; }
.col { display: flex; flex-direction: column; align-items: flex-start; }
.col button { display: flex; align-items: center; gap: 4px; height: 22px; padding: 0 1px; white-space: nowrap; }
.col.inset button { padding: 0 3px 0 4px; }
.col button.on { background: #cde6ec; box-shadow: inset 0 0 0 1px #b4d6de; }
.col button:disabled { color: #b8b8b8; }
.mid { padding-top: 2px; }
.mid.lead { padding-left: 8px; }
.mid button { height: 34px; gap: 3px; padding: 0; }
.mid svg { width: 24px; height: 24px; }
.selrow { display: flex; align-items: center; height: 34px; }
select { appearance: none; padding: 0 3px; border: 1px solid #999; border-radius: 0; outline: 0; background: #fff url("data:image/svg+xml,%3Csvg xmlns='http://www.w3.org/2000/svg' width='8' height='5'%3E%3Cpath d='M0 0h8L4 5z' fill='%23222'/%3E%3C/svg%3E") right 4px center no-repeat; }
.selrow select { width: 97px; height: 20px; }
.big { display: flex; flex-direction: column; align-items: center; padding: 5px 0 0 2px; line-height: 16px; white-space: nowrap; }
.big svg { width: 28px; height: 28px; margin-bottom: 7px; }
.big .caret { margin-top: 4px; }
.foot { position: relative; display: flex; justify-content: center; height: 20px; line-height: 20px; color: #0f6f93; }
.foot .caret { position: absolute; right: 8px; top: 8px; }
.rest .foot { margin-top: 73px; }
.rest .caret { right: 6px; }

/* selection bar */
.selbar { display: flex; align-items: center; height: 34px; flex: none; border-bottom: 1px solid #7d8b90; font-size: 11px; }
.selbar .sep { height: 26px; }
.menu { display: flex; align-items: center; width: 94px; padding-left: 10px; gap: 4px; white-space: nowrap; }
.menu svg { width: 24px; height: 24px; }
.filter { width: 281px; height: 20px; margin: 0 4px 0 12px; color: #999; }
.icons { display: flex; align-items: center; }
.icons svg { width: 33px; height: 22px; }
.icons .caret { margin: 0 2px 0 1px; }
.icons + .sep { margin-left: 6px; }
.icons.view { padding-left: 7px; }
.icons.view .caret { margin: 0 3px 0 2px; }
.selbar .last { margin: 12px 5px 0 auto; }

main { display: flex; flex: 1; min-height: 0; }

/* resource bar */
.resource { display: flex; flex-direction: column; align-items: flex-end; width: 32px; flex: none; background: #dcdcdc; border-right: 1px solid #b0b0b0; }
.resource button { display: flex; justify-content: center; align-items: center; width: 29px; height: 42px; flex: none; }
.resource svg { width: 24px; height: 24px; }
.resource .gearbtn { width: 31px; align-items: flex-start; padding-top: 6px; }
.resource .gearbtn svg { width: 14px; height: 14px; }
.resource .on { height: 45px; background: #fff; border: 1px solid #999; border-right: 0; }
.resource .reuse { height: 36px; margin-bottom: 9px; }
.resource .tall { height: 54px; }
.resource .wizard { margin-top: -6px; }

/* navigator */
.navigator { display: flex; flex-direction: column; width: 525px; flex: none; padding: 0 9px 4px 6px; border-right: 1px solid #7d8b90; }
.navhead { display: flex; justify-content: space-between; align-items: center; height: 29px; flex: none; padding: 0 7px 0 4px; }
.navhead button { width: 12px; height: 11px; border: 1px solid #111; border-top-width: 2px; }
.tree { display: flex; flex-direction: column; flex: 1; min-height: 0; border: 1px solid #c8c8c8; border-bottom: 0; }
.rows { flex: 1; min-height: 0; overflow: hidden; }
table { width: 100%; border-collapse: separate; border-spacing: 0; table-layout: fixed; }
.c1 { width: 353px; }
.c2 { width: 100px; }
th { height: 21px; padding: 0 6px; text-align: left; font-weight: 400; background: #f0f0f0; border-right: 1px solid #ccc; border-bottom: 1px solid #ccc; }
.sort { display: inline-block; width: 10px; height: 5px; margin: 0 0 2px 18px; background: #111; clip-path: polygon(50% 0, 100% 100%, 0 100%); }
td { height: 20px; padding: 0; border-right: 1px solid #e4e4e4; border-bottom: 1px solid #e8e8e8; white-space: nowrap; }
tbody tr:nth-child(even) { background: #fafafa; }
td div, td label { display: flex; align-items: center; }
td div { height: 19px; }
.g { width: 20px; height: 20px; }
.g2 { width: 41px; height: 20px; }
.i { margin: 0 3px 0 0; }
.k { width: 12px; height: 12px; margin: 0 2px; }
.ok { width: 12px; height: 12px; margin-left: 6px; }
td input { appearance: none; width: 12px; height: 12px; margin: 0 2px 0 0; border: 1px solid #111; background: #fff url("data:image/svg+xml,%3Csvg xmlns='http://www.w3.org/2000/svg' viewBox='0 0 12 12'%3E%3Cpath d='M0 5l3 2q4-5 9-7Q8 6 5 12H3z' fill='%2318b82e'/%3E%3C/svg%3E") center / 10px no-repeat; }
.dim { color: #9a9a9a; }
.bold { font-weight: 700; }
.hscroll { height: 18px; flex: none; background: #f0f0f0; padding: 8px 59px 0 18px; }
.hscroll span { display: block; height: 2px; background: #8a8a8a; }
.splitter { height: 6px; flex: none; background: #dcdcdc; border: 1px solid #a0a0a0; }

/* graphics window */
.view-area { display: flex; flex-direction: column; flex: 1; min-width: 0; }
.doctabs { height: 23px; flex: none; }
.doctabs a { display: inline-flex; align-items: center; height: 23px; padding: 0 7px 0 6px; background: #519fba; color: #fff; white-space: nowrap; }
.doctabs .p { width: 14px; height: 14px; margin-right: 6px; }
.doctabs .m { width: 10px; height: 12px; margin: 0 8px 0 9px; }
.doctabs .c { width: 8px; height: 8px; color: #c0b0b0; }
.canvas { position: relative; flex: 1; min-height: 0; overflow: hidden; background: #242529; border-left: 1px solid #ddd; }
.drawing { width: 100%; height: 100%; }
.solid, .dash, .dashdot { stroke: #00f000; stroke-width: 2; fill: none; }
.dash { stroke-dasharray: 14 4; }
.dash path { stroke-dasharray: 16 4 8 4; }
.dashdot { stroke-dasharray: 24 5 8 5; }
.picked { stroke: #f29a44; stroke-width: 3; fill: none; }
.dimline { stroke: #3e4a5a; stroke-width: 2; fill: none; }
.arrowline { stroke: #14243c; fill: #14243c; }
.dimtext { fill: #2c28d8; font: 13px "Liberation Sans", sans-serif; }
.ax { fill: #a03034; font-size: 12px; }
.ay { fill: #2f8a38; font-size: 12px; }
.radius { position: absolute; left: 520px; top: 563px; display: flex; align-items: center; height: 31px; padding: 0 3px; background: #f0f0f0; border: 1px solid #aaa; }
.grip { width: 7px; height: 22px; margin-right: 9px; background: radial-gradient(circle, #b0b0b0 1px, transparent 2px) 0 0 / 4px 4px; }
.radius input { width: 57px; height: 22px; margin-left: 2px; padding: 0 2px; border: 1px solid #999; background: #0078d7; color: #fff; outline: 0; box-shadow: inset 0 0 0 2px #fff; text-indent: 2px; }
.progress { position: absolute; left: 98px; bottom: 1px; width: 244px; height: 114px; background: #f0f0f0; border: 1px solid #a8a8a8; }
.ptitle { display: flex; align-items: center; height: 28px; padding: 0 9px; margin: -1px -1px 0; background: #519fba; color: #fff; }
.ptitle .min { width: 8px; background: #fff; margin: 11px 14px 0 auto; }
.max { width: 12px; height: 11px; margin-right: 12px; border: 1px solid #b0b8b8; }
.ptitle svg { width: 12px; height: 12px; color: #b4b8b8; }
.pbody { display: flex; padding: 9px 14px 0; gap: 17px; }
.pbody svg { width: 24px; height: 30px; }
.pbody p { line-height: 17px; }
.progress button { display: block; width: 63px; height: 25px; margin: 7px 0 0 85px; background: #74b3c9; color: #fff; }

/* status line */
.status { display: grid; grid-template-columns: 906px 1fr auto; align-items: center; height: 24px; flex: none; border-top: 1px solid #a8a8a8; border-bottom: 1px solid #b4b4b4; font-size: 11px; font-weight: 700; }
.cue { padding-left: 3px; }
.sicons { display: flex; align-items: center; gap: 7px; padding-right: 27px; }
.sicons svg { width: 15px; height: 15px; }
.sicons svg:last-child { margin-left: 6px; }

/* task bar */
.taskbar { position: relative; display: flex; align-items: center; height: 47px; flex: none; padding-left: 21px; background: linear-gradient(90deg, #e6e0e6 0, #dbe0ee 18%, #e4e4ea 32%, #e6e4ea 50%, #eee4e2 58%, #e4e2e6 75%, #d8eef5 82%, #d6e4f0 88%, #dcdcea 93%, #ecd6da 96%, #efd3d5 100%); }
.taskbar button { display: flex; align-items: center; height: 46px; white-space: nowrap; }
.taskbar button > svg { width: 24px; height: 24px; }
.taskbar button + button { margin-left: 20px; }
.app-l { position: relative; width: 160px; gap: 8px; }
.app-l span { flex: 1; min-width: 0; text-align: left; }
.app-l .clip { overflow: hidden; }
.app-l.short { width: 92px; }
.run::after { content: ""; position: absolute; left: 9px; bottom: 4px; width: 6px; height: 3px; border-radius: 2px; background: #808080; }
.tray { display: flex; align-items: center; margin-left: auto; padding-right: 21px; gap: 16px; }
.tray .sm { width: 12px; height: 12px; margin-right: 2px; }
.far { margin-left: 32px; }
.ime { width: 16px; font-size: 15px; line-height: 20px; color: #fff; text-shadow: 0 0 1px #222, 0 0 1px #222, 0 0 1px #222; }
.sg { margin-left: 6px; }
.mo { margin-left: 6px; }
.so { margin-left: -8px; }
.tray time { text-align: right; font-size: 11px; margin-left: 4px; margin-right: -8px; }
.bl { width: 14px; }
.watermark { position: absolute; right: 2px; bottom: 3px; font: 13px/20px "Liberation Mono", "Noto Sans CJK SC", monospace; color: #888; text-shadow: 1px 1px 0 #fff; white-space: nowrap; }
.watermark b { font-size: 16px; font-weight: 400; }

/* fillet dialog */
.fillet { position: absolute; left: 199px; top: 133px; width: 164px; background: #f0f0f0; }
.ftitle { display: flex; align-items: center; height: 24px; padding: 0 9px 0 7px; gap: 8px; background: #519fba; color: #fff; font-size: 14px; }
.ftitle svg { width: 14px; height: 14px; }
.ftitle button { margin-left: auto; }
.ftitle button svg { width: 12px; height: 12px; }
.fbody { display: flex; gap: 3px; padding: 6px 4px 1px; }
fieldset { flex: 1; min-width: 0; margin: 0; padding: 0 4px 4px 5px; border: 0; background: #fff; box-shadow: 0 1px 1px #ccc; }
legend { float: left; width: 100%; padding: 0 0 0 4px; font-size: 14px; line-height: 20px; color: #0f6f93; }
fieldset div { display: flex; gap: 2px; clear: both; }
fieldset button { width: 32px; height: 32px; flex: none; border: 1px solid #999; background: #fff; }
fieldset button.on { background: #8cc0cf; border-color: #8cc0cf; }
fieldset svg { width: 30px; height: 30px; }

.pointer { position: absolute; inset: 0; width: 100%; height: 100%; pointer-events: none; }
```
